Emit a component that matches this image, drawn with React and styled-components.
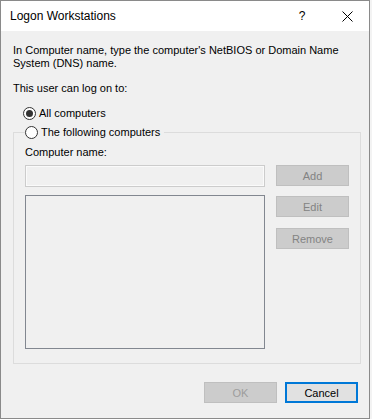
import React from "react"
import styled, { createGlobalStyle } from "styled-components"

const GlobalStyle = createGlobalStyle`
  html, body {
    margin: 0;
    padding: 0;
    background: #f3f3f3;
  }
  * {
    box-sizing: border-box;
  }
`

const Window = styled.div`
  width: 370px;
  height: 419px;
  border: 1px solid #8a8a8a;
  background: #f0f0f0;
  display: flex;
  flex-direction: column;
  font-family: "Liberation Sans", Arial, sans-serif;
  font-size: 11px;
  color: #000;
`

const TitleBar = styled.div`
  height: 30px;
  background: #fff;
  display: flex;
  align-items: center;
  padding-left: 9px;
  font-size: 12px;
`

const Title = styled.span`
  flex: 1;
`

const TitleButton = styled.span`
  width: ${p => p.$w}px;
  display: flex;
  align-items: center;
  justify-content: center;
  font-size: 12px;
`

const Body = styled.div`
  flex: 1;
  display: flex;
  flex-direction: column;
  padding: 13px 8px 0 12px;
`

const Text = styled.div`
  line-height: 13px;
  margin-top: ${p => p.$top || 0}px;
`

const RadioRow = styled.label`
  display: flex;
  align-items: center;
  gap: 3px;
  height: 13px;
  line-height: 13px;
  margin-top: ${p => p.$top || 0}px;
  margin-left: ${p => p.$left || 0}px;
`

const RadioCircle = styled.span`
  width: 13px;
  height: 13px;
  border-radius: 50%;
  border: 1px solid #333;
  background: #fff;
  display: flex;
  align-items: center;
  justify-content: center;

  &::after {
    content: "";
    width: 7px;
    height: 7px;
    border-radius: 50%;
    background: ${p => (p.$checked ? "#333" : "transparent")};
  }
`

const Group = styled.fieldset`
  margin: 6px 0 0 0;
  padding: 0;
  border: 1px solid #dcdcdc;
  min-width: 0;
`

const Legend = styled.legend`
  padding: 0 4px 0 0;
  margin-left: 11px;
`

const GroupContent = styled.div`
  display: grid;
  grid-template-columns: 240px 73px;
  column-gap: 11px;
  padding: 7px 11px 14px 11px;
`

const LeftColumn = styled.div`
  display: flex;
  flex-direction: column;
`

const Input = styled.div`
  height: 22px;
  margin-top: 6px;
  border: 1px solid #cccccc;
  box-shadow: inset 0 0 0 1px #fafafa;
  background: #f0f0f0;
`

const ListBox = styled.div`
  height: 154px;
  margin-top: 8px;
  border: 1px solid #828790;
  background: #f0f0f0;
`

const ButtonColumn = styled.div`
  display: flex;
  flex-direction: column;
  gap: 10px;
  padding-top: 19px;
`

const Button = styled.div`
  width: 73px;
  height: 21px;
  display: flex;
  align-items: center;
  justify-content: center;
  border: ${p => (p.$primary ? "2px solid #0078d7" : "1px solid #bfbfbf")};
  background: ${p => (p.$primary ? "#e1e1e1" : "#cccccc")};
  color: ${p => (p.$primary ? "#000" : p.$faint ? "#9d9d9d" : "#838383")};
  font-size: 11px;
  margin-top: ${p => p.$top || 0}px;
`

const Footer = styled.div`
  display: flex;
  justify-content: flex-end;
  gap: 8px;
  margin-top: 18px;
  margin-right: 3px;
`

const CloseIcon = () => (
  <svg width="11" height="11" viewBox="0 0 11 11">
    <path d="M0.5 0.5 L10.5 10.5 M10.5 0.5 L0.5 10.5" stroke="#000" strokeWidth="1" fill="none" />
  </svg>
)

const App = () => {
  return (
    <>
      <GlobalStyle />
      <Window>
        <TitleBar>
          <Title>Logon Workstations</Title>
          <TitleButton $w={46}>?</TitleButton>
          <TitleButton $w={44}>
            <CloseIcon />
          </TitleButton>
        </TitleBar>
        <Body>
          <Text>
            In Computer name, type the computer's NetBIOS or Domain Name
            <br />
            System (DNS) name.
          </Text>
          <Text $top={12}>This user can log on to:</Text>
          <RadioRow $top={12} $left={10}>
            <RadioCircle $checked />
            All computers
          </RadioRow>
          <Group>
            <Legend>
              <RadioRow>
                <RadioCircle />
                The following computers
              </RadioRow>
            </Legend>
            <GroupContent>
              <LeftColumn>
                <Text>Computer name:</Text>
                <Input />
                <ListBox />
              </LeftColumn>
              <ButtonColumn>
                <Button>Add</Button>
                <Button>Edit</Button>
                <Button $top={1}>Remove</Button>
              </ButtonColumn>
            </GroupContent>
          </Group>
          <Footer>
            <Button $faint>OK</Button>
            <Button $primary>Cancel</Button>
          </Footer>
        </Body>
      </Window>
    </>
  )
}

export default App
